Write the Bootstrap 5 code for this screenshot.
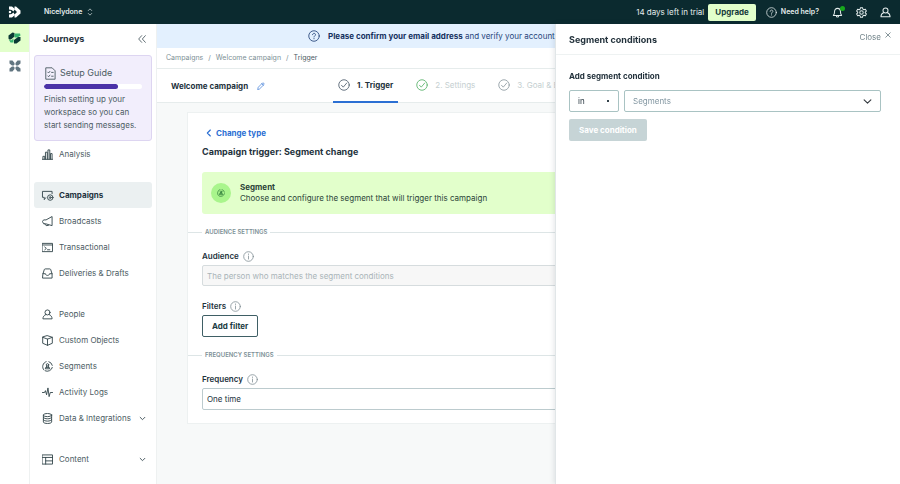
<!DOCTYPE html>
<html lang="en">
<head>
<meta charset="utf-8">
<meta name="viewport" content="width=device-width, initial-scale=1">
<title>Campaign trigger</title>
<link href="https://cdn.jsdelivr.net/npm/bootstrap@5.3.0/dist/css/bootstrap.min.css" rel="stylesheet">
<style>
:root{--ink:#23323c;--soft:#4c5c63;--mute:#7d9096;--line:#e6ecec;--brand:#0b2a2f;--lime:#e2ffcb;--blue:#2b6fd3}
body{font-family:Inter,"Liberation Sans",sans-serif;font-size:8px;line-height:12px;color:var(--ink);background:#f7f9f9}
svg{display:block;flex:none;fill:none;stroke:currentColor;stroke-width:1.7;stroke-linecap:round;stroke-linejoin:round}
a{color:inherit;text-decoration:none}
button{font:inherit}
.ic12{width:12px;height:12px}.ic11{width:11px;height:11px}.ic8{width:8px;height:8px}
.topbar{height:24px;background:var(--brand);color:#e4ecec;padding:0 9px 0 8px}
.topbar button,.bare{border:0;background:none;color:inherit;padding:0}
.topbar .upgrade{height:17px;padding:0 7px;border-radius:2px;background:var(--lime);color:#163a3a;font-weight:700}
.topbar .tool{margin-left:13px}
.topbar .tool svg{stroke-width:2.2}
.ws{margin-left:23px}
.ws,.needhelp{font-size:7px;font-weight:600}
.needhelp{margin-left:10px}
.notice{position:absolute;top:-1px;right:-2px;width:5px;height:5px;border-radius:50%;background:#17a81c}
.rail{width:30px;background:#fff;border-right:1px solid #eef1f1}
.rail a{height:28px}
.rail .on{background:var(--lime)}
.side{width:127px;background:#fff;border-right:1px solid #eef1f1;padding:0 4px}
.sidehead{height:31px;padding:0 6px 2px 9px;font-size:9px;font-weight:700}
.sidehead svg{color:var(--soft)}
.setup{height:86px;border:1px solid #ddd5f1;border-radius:3px;background:#f2eefc;padding:9px 9px 0;color:var(--soft)}
.setup .cap{font-size:9px;line-height:16px;gap:3px}
.setup .progress{height:5px;margin:3px 0 4px;background:#fff;--bs-progress-bar-bg:#4b32a8}
.setup .progress-bar{border-radius:3px}
.setup p{line-height:13px}
.side .nav-link{height:26px;padding:0 6px 0 8px;color:var(--soft);gap:6px;border-radius:3px}
.side .nav-link .ic11{color:#33464c;stroke-width:2}
.side .nav-link.active{background:#ebf0f1;color:var(--ink);font-weight:700}
.side .grp{margin-top:15px}
.notify{height:24px;background:#e3f0fe;color:#26447a;gap:8px;white-space:nowrap;padding-left:151px}
.notify a{font-weight:700;color:#16305f}
.crumbs{height:21px;background:#fff;border-bottom:1px solid var(--line);padding:0 9px}
.crumbs .breadcrumb{font-size:7px;--bs-breadcrumb-divider-color:#7d9096;--bs-breadcrumb-item-padding-x:5px;--bs-breadcrumb-item-active-color:#4c5c63;color:var(--mute)}
.steps{height:34px;background:#fff;border-bottom:1px solid var(--line);padding-left:14px}
.steps .name{width:162px;gap:9px;font-weight:700}
.steps .name svg{color:var(--blue);stroke-width:1.3}
.steps .nav{gap:13px}
.steps .nav-link{height:34px;padding:0 5px;gap:7px;color:#c5cfd1;border-bottom:2px solid transparent}
.steps .nav-link svg{color:#8e9ba2}
.steps .nav-link.active{color:var(--ink);font-weight:700;border-color:var(--blue)}
.steps .nav-link.active svg{color:#4f5f6e}
.steps .done svg{color:#58b26a}
.sheet{margin:9px 30px 0;background:#fff;border:1px solid #edf1f1;padding:14px 14px 13px}
.back{color:var(--blue);font-weight:700;gap:3px;padding-left:3px}
.sheet h1{font-size:9px;line-height:14px;font-weight:700;margin:6px 0 13px}
.kind{background:var(--lime);border-radius:3px;padding:10px 9px;gap:9px;line-height:11px;color:#2b4438}
.dot{width:20px;height:20px;border-radius:50%;background:#a9f58c;color:#17632b}
.rule{font-size:6px;font-weight:600;color:var(--mute);margin:12px -14px 0;gap:3px}
.rule::before,.rule::after{content:"";height:1px;background:#dde5e6;flex:1}
.rule::before{flex:0 0 14px}
.lab{font-weight:600;margin-top:12px;margin-bottom:3px;gap:4px}
.field + .lab{margin-top:14px}
.lab button{color:#7e8d93}
.field{font-size:8px;line-height:12px;height:22px;padding:0 4px;border:1px solid #bccbce;border-radius:2px;color:var(--ink)}
input.field{height:21px}
.field:disabled{background:#f7f7f7;border-color:#d6dcde}
.field::placeholder{color:#a9b4b8}
.outline{height:22px;padding:0 9px;font-size:8px;line-height:12px;font-weight:700;border:1px solid #3f5f65;border-radius:2px;color:#1c3c43;background:#fff}
.drawer{position:fixed;top:24px;right:0;bottom:0;width:345px;background:#fff;border-left:1px solid #e1e6e8;box-shadow:-1px 0 5px rgba(30,50,60,.12);z-index:5}
.drawerhead{height:31px;padding:1px 9px 0 13px;border-bottom:1px solid #eef2f2}
.drawerhead h2{font-size:9px;line-height:12px;font-weight:700}
.drawerhead button{color:#718389;gap:4px;height:24px}
.drawerhead button svg{align-self:flex-start;margin-top:7px}
.drawerbody{padding:15px 19px 0 13px}
.drawerbody label{font-weight:700}
.drawerbody .field{border-color:#a9c3c3;padding-left:8px}
.rowgap{gap:5px}
.opsel{width:50px;flex:none;--bs-form-select-bg-img:radial-gradient(circle,#34434b 1px,transparent 1px);background-size:4px 4px;background-position:right 8px center}
.segsel.field{color:#8296a1;background-size:9px 9px;background-position:right 8px center}
.save,.save:disabled{height:22px;padding:0 10px;border:0;border-radius:2px;background:#c6d4d6;color:#fff;font-size:8px;line-height:12px;font-weight:700;opacity:1;margin-top:7px}
</style>
<script src="https://cdn.jsdelivr.net/npm/bootstrap@5.3.0/dist/js/bootstrap.bundle.min.js"></script>
</head>
<body class="d-flex flex-column min-vh-100">
<svg class="d-none" aria-hidden="true">
<symbol id="check" viewBox="0 0 24 24"><circle cx="12" cy="12" r="10.5"/><path d="M7 12.5l3.5 3.8L17.5 8"/></symbol>
<symbol id="help" viewBox="0 0 24 24"><circle cx="12" cy="12" r="10.5"/><path d="M9 9.4C9 5.6 15 5.6 15 9.4c0 2.2-3 2.3-3 4.6M12 17v.6"/></symbol>
<symbol id="info" viewBox="0 0 24 24"><circle cx="12" cy="12" r="10.5"/><path d="M12 11v6.5M12 6.500v1"/></symbol>
<symbol id="person" viewBox="0 0 24 24"><circle cx="12" cy="7.5" r="5.5"/><path d="M8.500 12C4.500 13.500 2 17 2 21.500h20c0-4.500-2.500-8-6.500-9.500"/></symbol>
<symbol id="seg" viewBox="0 0 24 24"><path d="M9 1.500A11 11 0 0 0 4 19.500M15 1.500a11 11 0 0 1 7.500 8M22.500 14a11 11 0 0 1-15.500 7.500"/><circle cx="12" cy="8.500" r="2.700"/><path d="M10.500 11L7 17h10l-3.500-6M9 14h6"/></symbol>
<symbol id="down" viewBox="0 0 12 12"><path d="M2 4l4 4 4-4"/></symbol>
</svg>

<header class="topbar d-flex align-items-center">
  <a href="#" aria-label="Home"><svg width="13" height="12" viewBox="0 0 26 24"><g fill="#fff" stroke="none"><path d="M2 1h6l6 5-3 5-4-3-5-1zM2 23h6l6-5-3-5-4 3-5 1z"/><path d="M13 1h3l9 8v6l-9 8h-3v-6l5-5-5-5z"/><circle cx="4" cy="12" r="2.500"/></g></svg></a>
  <button type="button" class="ws d-flex align-items-center gap-1">Nicelydone <svg class="ic8" viewBox="0 0 12 14"><path d="M3 4.500l3-3 3 3M3 9.500l3 3 3-3" opacity=".7"/></svg></button>
  <div class="ms-auto d-flex align-items-center">
    <span class="me-1">14 days left in trial</span>
    <button type="button" class="upgrade">Upgrade</button>
    <button type="button" class="needhelp d-flex align-items-center gap-1"><svg class="ic11"><use href="#help"/></svg>Need help?</button>
    <button type="button" class="tool position-relative" aria-label="Notifications"><svg class="ic11" viewBox="0 0 24 24"><path d="M3 18.500c2-2 2.500-3.500 2.500-8C5.500 6 8 3 12 3s6.500 3 6.500 7.500c0 4.500.5 6 2.500 8zM9.500 19c0 4 5 4 5 0"/></svg><span class="notice"></span></button>
    <button type="button" class="tool" aria-label="Settings"><svg class="ic11" viewBox="0 0 24 24"><path d="M9.800 1.500h4.400l.8 3.200 2.200 1.300 3.200-1 2.200 3.900-2.400 2.300v1.600l2.400 2.300-2.200 3.900-3.200-1-2.200 1.300-.8 3.200H9.800L9 19.300 6.800 18l-3.200 1-2.200-3.900 2.400-2.300v-1.600L1.400 8.900 3.600 5l3.200 1L9 4.700z"/><circle cx="12" cy="12" r="3.800"/></svg></button>
    <button type="button" class="tool" aria-label="Account"><svg class="ic11"><use href="#person"/></svg></button>
  </div>
</header>

<div class="d-flex flex-grow-1">
  <nav class="rail flex-shrink-0" aria-label="Products">
    <a href="#" class="on d-flex align-items-center justify-content-center" aria-label="Journeys"><svg width="13" height="12" viewBox="0 0 26 24"><g stroke="none"><path fill="#0b3a35" d="M1 13V7l8-6 4 1v7l-7 6-4 0z"/><path fill="#35b36f" d="M14 3h10l1 4-6 4h-6V5z"/><path fill="#0b3a35" d="M12 16l8-6h5v7l-8 6h-5z"/><path fill="#35b36f" d="M2 16l5 .5 4-3.500v8H5z"/></g></svg></a>
    <a href="#" class="d-flex align-items-center justify-content-center" aria-label="Data pipelines"><svg class="ic12" viewBox="0 0 24 24"><g fill="#617580" stroke="none"><path d="M1 1h6l4 5v5H6L1 7zM23 1h-6l-4 5v5h5l5-4zM1 23h6l4-5v-5H6l-5 4zM23 23h-6l-4-5v-5h5l5 4z"/></g><circle cx="12" cy="12" r="2.500" fill="#fff" stroke="none"/></svg></a>
  </nav>

  <aside class="side flex-shrink-0">
    <div class="sidehead d-flex align-items-center justify-content-between">Journeys
      <button type="button" class="bare" aria-label="Collapse menu"><svg class="ic8" viewBox="0 0 12 12"><path d="M5.500 1L1 6l4.500 5M11 1L6.500 6l4.500 5" stroke-width="1.300"/></svg></button></div>
    <div class="setup">
      <div class="cap d-flex align-items-center"><svg width="13" height="13" viewBox="0 0 24 24"><path d="M4 1.500h11l5.500 5.500v15.500H4zM7 9.500l1.500 1.500L11 8M7 16.500L8.500 18l2.500-3M14 10h3M14 17h3"/></svg>Setup Guide</div>
      <div class="progress" role="progressbar" aria-label="Setup progress" aria-valuenow="75" aria-valuemin="0" aria-valuemax="100"><div class="progress-bar" style="width:75%"></div></div>
      <p class="mb-0">Finish setting up your workspace so you can start sending messages.</p>
    </div>
    <ul class="nav flex-column">
      <li><a href="#" class="nav-link d-flex align-items-center"><svg class="ic11" viewBox="0 0 24 24"><path d="M1 22.500h22M2 22v-6h4v6M7.500 22V7h4v15M13 22V2h4v20M18.500 22V10H22v12"/></svg>Analysis</a></li>
      <li class="grp"><a href="#" class="nav-link active d-flex align-items-center"><svg class="ic11 overflow-visible" viewBox="0 0 24 24"><path d="M8 17l-3 4v-5H1V3h21v5"/><circle cx="18" cy="16.500" r="6"/><circle cx="18" cy="16.500" r="2"/></svg>Campaigns</a></li>
      <li><a href="#" class="nav-link d-flex align-items-center"><svg class="ic11" viewBox="0 0 24 24"><path d="M22 2v19L8 17H3.500L1 12l2.500-3.500H8zM6 17l3 4 5-.5"/></svg>Broadcasts</a></li>
      <li><a href="#" class="nav-link d-flex align-items-center"><svg class="ic11" viewBox="0 0 24 24"><path d="M1 3h22v18H1zM1 6.500h22M6 11l3.500 3L6 17M12 17h5"/></svg>Transactional</a></li>
      <li><a href="#" class="nav-link d-flex align-items-center"><svg class="ic11" viewBox="0 0 24 24"><path d="M2 13L5 3.500Q5.500 2 7 2h10q1.500 0 2 1.500L22 13v9H2zM2 12.500h5.500c.5 5 8.500 5 9 0H22"/></svg>Deliveries &amp; Drafts</a></li>
      <li class="grp"><a href="#" class="nav-link d-flex align-items-center"><svg class="ic11"><use href="#person"/></svg>People</a></li>
      <li><a href="#" class="nav-link d-flex align-items-center"><svg class="ic11" viewBox="0 0 24 24"><path d="M12 1.500L22.500 5v13L12 22.500 1.500 18V5zM1.500 5L12 9l10.500-4M12 9v13.500"/></svg>Custom Objects</a></li>
      <li><a href="#" class="nav-link d-flex align-items-center"><svg class="ic11"><use href="#seg"/></svg>Segments</a></li>
      <li><a href="#" class="nav-link d-flex align-items-center"><svg class="ic11" viewBox="0 0 24 24"><path d="M1 12h4.500l2-4 2.500 9 3-15 2.500 19 2.500-9H23"/></svg>Activity Logs</a></li>
      <li><a href="#" class="nav-link d-flex align-items-center"><svg class="ic11" viewBox="0 0 24 24"><ellipse cx="12" cy="4.500" rx="9" ry="3.500"/><path d="M3 4.500v15c0 4.500 18 4.500 18 0v-15M3 9.500c0 4.500 18 4.500 18 0M3 14.500c0 4.500 18 4.500 18 0"/></svg>Data &amp; Integrations<svg class="ms-auto" width="7" height="7"><use href="#down"/></svg></a></li>
      <li class="grp"><a href="#" class="nav-link d-flex align-items-center"><svg class="ic11" viewBox="0 0 24 24"><path d="M1 2h22v20H1zM1 7.500h22M8 7.500V22M8 15h15"/></svg>Content<svg class="ms-auto" width="7" height="7"><use href="#down"/></svg></a></li>
    </ul>
  </aside>

  <main class="flex-grow-1 overflow-hidden">
    <div class="notify d-flex align-items-center"><svg class="ic12"><use href="#help"/></svg><span><a href="#">Please confirm your email address</a> and verify your account</span></div>
    <nav class="crumbs d-flex align-items-center" aria-label="Breadcrumb"><ol class="breadcrumb mb-0">
      <li class="breadcrumb-item"><a href="#">Campaigns</a></li><li class="breadcrumb-item"><a href="#">Welcome campaign</a></li><li class="breadcrumb-item active" aria-current="page">Trigger</li></ol></nav>
    <div class="steps d-flex align-items-center">
      <div class="name d-flex align-items-center flex-shrink-0">Welcome campaign<button type="button" class="bare" aria-label="Rename"><svg class="ic8" viewBox="0 0 16 16"><path d="M1.500 14.500l1-4L11 2q1-1 2.500.5T14 5l-8.500 8.500zM9.500 3.500l3 3"/></svg></button></div>
      <ul class="nav flex-nowrap text-nowrap">
        <li><a href="#" class="nav-link active d-flex align-items-center"><svg class="ic12"><use href="#check"/></svg>1. Trigger</a></li>
        <li><a href="#" class="nav-link done d-flex align-items-center"><svg class="ic12"><use href="#check"/></svg>2. Settings</a></li>
        <li><a href="#" class="nav-link d-flex align-items-center"><svg class="ic12"><use href="#check"/></svg>3. Goal &amp; Exit</a></li>
      </ul>
    </div>
    <form class="sheet">
      <a href="#" class="back d-flex align-items-center"><svg class="ic8" viewBox="0 0 12 12"><path d="M8 1.500L3.500 6 8 10.500"/></svg>Change type</a>
      <h1>Campaign trigger: Segment change</h1>
      <div class="kind d-flex align-items-center"><span class="dot d-flex align-items-center justify-content-center"><svg class="ic8"><use href="#seg"/></svg></span><div><div class="fw-bold">Segment</div>Choose and configure the segment that will trigger this campaign</div></div>
      <div class="rule d-flex align-items-center">AUDIENCE SETTINGS</div>
      <div class="lab d-flex align-items-center"><label for="aud">Audience</label><button type="button" class="bare" aria-label="About audience"><svg class="ic11"><use href="#info"/></svg></button></div>
      <input id="aud" class="form-control field" disabled placeholder="The person who matches the segment conditions">
      <div class="lab d-flex align-items-center"><span id="filt">Filters</span><button type="button" class="bare" aria-label="About filters"><svg class="ic11"><use href="#info"/></svg></button></div>
      <button type="button" class="btn outline d-block" aria-describedby="filt">Add filter</button>
      <div class="rule d-flex align-items-center">FREQUENCY SETTINGS</div>
      <div class="lab d-flex align-items-center"><label for="freq">Frequency</label><button type="button" class="bare" aria-label="About frequency"><svg class="ic11"><use href="#info"/></svg></button></div>
      <select id="freq" class="form-select field"><option>One time</option></select>
    </form>
  </main>
</div>

<section class="drawer" aria-labelledby="dt">
  <div class="drawerhead d-flex justify-content-between align-items-center"><h2 id="dt" class="mb-0">Segment conditions</h2>
    <button type="button" class="bare d-flex align-items-center align-self-start">Close <svg width="6" height="6" viewBox="0 0 12 12"><path d="M1.500 1.500l9 9M10.500 1.500l-9 9"/></svg></button></div>
  <form class="drawerbody">
    <label class="mb-2 d-block" for="segv">Add segment condition</label>
    <div class="d-flex rowgap"><select class="form-select field opsel" aria-label="Operator"><option>in</option></select>
      <select id="segv" class="form-select field segsel"><option>Segments</option></select></div>
    <button type="submit" class="btn save" disabled>Save condition</button>
  </form>
</section>
</body>
</html>
